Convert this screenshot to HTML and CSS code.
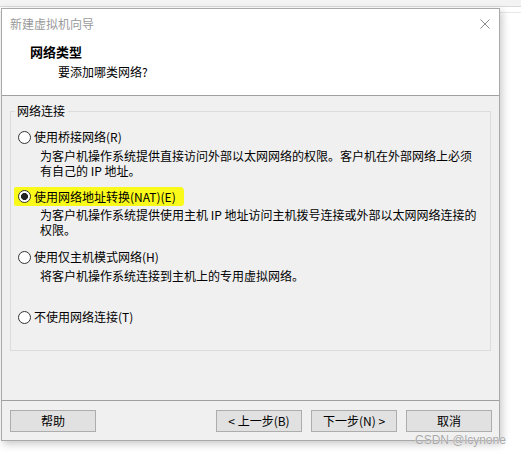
FILE: index.html
```html
<!DOCTYPE html>
<html lang="zh-CN">
<head>
    <meta charset="UTF-8">
    <meta name="viewport" content="width=device-width, initial-scale=1.0">
    <title>新建虚拟机向导</title>
    <link rel="stylesheet" href="styles.css">
</head>
<body>
    <div class="dialog">
        <div class="header">
            <div class="titlebar">
                <span class="title">新建虚拟机向导</span>
                <svg class="close" width="10" height="10" viewBox="0 0 10 10">
                    <path d="M0.5 0.5 L9.5 9.5 M9.5 0.5 L0.5 9.5" stroke="#8a8a8a" stroke-width="1" fill="none"/>
                </svg>
            </div>
            <div class="heading">网络类型</div>
            <div class="subheading">要添加哪类网络?</div>
        </div>

        <div class="main">
            <fieldset class="group">
                <legend>网络连接</legend>

                <div class="option">
                    <label class="choice"><input type="radio" name="net">使用桥接网络(R)</label>
                    <p class="desc">为客户机操作系统提供直接访问外部以太网网络的权限。客户机在外部网络上必须<br>有自己的 IP 地址。</p>
                </div>

                <div class="option">
                    <label class="choice marked"><input type="radio" name="net" checked>使用网络地址转换(NAT)(E)</label>
                    <p class="desc">为客户机操作系统提供使用主机 IP 地址访问主机拨号连接或外部以太网网络连接的<br>权限。</p>
                </div>

                <div class="option">
                    <label class="choice"><input type="radio" name="net">使用仅主机模式网络(H)</label>
                    <p class="desc">将客户机操作系统连接到主机上的专用虚拟网络。</p>
                </div>

                <div class="option last">
                    <label class="choice"><input type="radio" name="net">不使用网络连接(T)</label>
                </div>
            </fieldset>
        </div>

        <div class="footer">
            <button>帮助</button>
            <div class="nav">
                <button>&lt; 上一步(B)</button>
                <button>下一步(N) &gt;</button>
                <button>取消</button>
            </div>
        </div>
    </div>

    <div class="watermark">CSDN @lcynone</div>
</body>
</html>
```

FILE: styles.css
```css
body {
    margin: 0;
    padding-top: 8px;
    font-family: "Noto Sans CJK SC", "Noto Sans", sans-serif;
    font-size: 12px;
    color: #000;
    background: linear-gradient(to bottom, #f3f3f3 0, #f3f3f3 6px, #d9d9d9 6px, #d9d9d9 7px, #fff 7px, #fff 12px, #e8e8e8 12px, #e8e8e8 13px, #fff 13px);
    position: relative;
    height: 457px;
    overflow: hidden;
}
.dialog {
    margin-left: 1px;
    width: 499px;
    height: 433px;
    box-sizing: border-box;
    border: 1px solid #a9a9a9;
    background: #f0f0f0;
    display: flex;
    flex-direction: column;
    box-shadow: 2px 3px 8px rgba(0,0,0,0.22);
}
.header {
    background: #fff;
    border-bottom: 1px solid #a0a0a0;
    height: 87px;
    box-sizing: border-box;
}
.titlebar {
    height: 28px;
    display: flex;
    align-items: center;
    justify-content: space-between;
    padding: 0 9px 0 8px;
}
.title {
    color: #9a9a9a;
    line-height: 16px;
    margin-top: 1px;
}
.close {
    margin-top: 1px;
}
.heading {
    margin-top: 7px;
    padding-left: 28px;
    font-size: 13px;
    font-weight: bold;
    line-height: 16px;
}
.subheading {
    margin-top: 4px;
    padding-left: 56px;
    line-height: 16px;
}
.main {
    flex: 1;
    padding: 7px 8px 0;
}
.group {
    margin: 0;
    border: 1px solid #dcdcdc;
    padding: 9px 4px 24px;
    min-width: 0;
}
.group legend {
    padding: 0 3px 0 2px;
    line-height: 16px;
}
.option {
    height: 60px;
}
.option.last {
    height: 18px;
}
.choice {
    display: inline-flex;
    align-items: center;
    height: 18px;
    line-height: 18px;
    padding-left: 3px;
}
.choice input {
    appearance: none;
    -webkit-appearance: none;
    width: 13px;
    height: 13px;
    margin: 0 3px 0 0;
    border: 1px solid #333;
    border-radius: 50%;
    background: #fff;
    box-sizing: border-box;
}
.choice input:checked {
    background: radial-gradient(circle, #222 0, #222 3.2px, #fff 3.8px);
}
.choice.marked {
    margin-left: -1px;
    padding: 0 8px 0 4px;
    height: 19px;
    margin-top: -1px;
    background: #f9f91a;
    border-radius: 2px 4px 3px 2px;
}
.desc {
    margin: 1px 0 0 25px;
    line-height: 15px;
}
.footer {
    height: 40px;
    box-sizing: border-box;
    border-top: 1px solid #a0a0a0;
    padding: 9px 7px 0 8px;
    display: flex;
    justify-content: space-between;
    align-items: flex-start;
}
.nav {
    display: flex;
    gap: 9px;
}
button {
    width: 86px;
    height: 22px;
    box-sizing: border-box;
    background: #e1e1e1;
    border: 1px solid #adadad;
    font-family: inherit;
    font-size: 12px;
    color: #000;
    padding: 0;
    line-height: 18px;
}
.watermark {
    position: absolute;
    left: 415px;
    top: 433px;
    font-family: "Liberation Sans", Arial, sans-serif;
    font-size: 12px;
    color: #a8a8a8;
    text-shadow: 0 0 1px #fff;
}
```
